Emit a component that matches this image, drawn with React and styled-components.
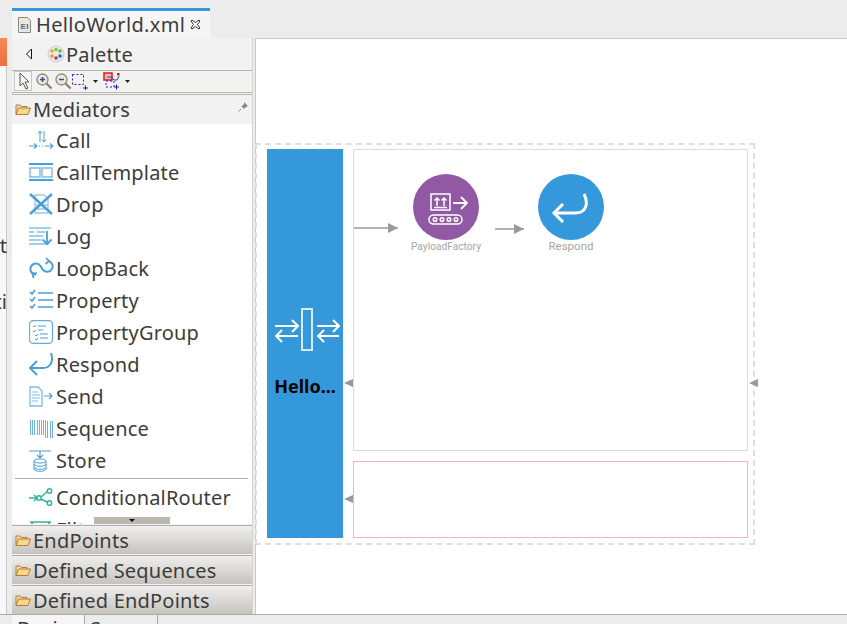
import React from 'react';
import styled, { createGlobalStyle } from 'styled-components';

const blue = '#3498db';
const iconBlue = '#4a9fd8';
const textColor = '#3c3c3c';
const uiFont = `'Noto Sans', 'Open Sans', sans-serif`;

const GlobalStyle = createGlobalStyle`
  html, body {
    margin: 0;
    padding: 0;
    height: 100%;
    overflow: hidden;
    background: #ececec;
  }
  * { box-sizing: border-box; }
`;

const Page = styled.div`
  width: 847px;
  height: 624px;
  display: flex;
  flex-direction: column;
  font-family: ${uiFont};
  color: ${textColor};
  background: #ececec;
  overflow: hidden;
`;

const Body = styled.div`
  display: flex;
  height: 576px;
  flex: none;
`;

const TabStrip = styled.div`
  height: 48px;
  margin-bottom: -10px;
  padding: 8px 0 0 12px;
  display: flex;
  flex: none;
`;

const EditorTab = styled.div`
  width: 198px;
  height: 30px;
  border-top: 3px solid ${blue};
  background: #f5f5f5;
  display: flex;
  align-items: center;
  padding-left: 6px;
  gap: 5px;
  font-size: 20px;
  letter-spacing: 0.35px;
  position: relative;
  z-index: 1;
  svg { flex: none; }
`;

const LeftStub = styled.div`
  width: 12px;
  flex: none;
  border-right: 5px solid #ececec;
  background: #f8f8f8;
  box-shadow: inset -1px 0 0 #c8c8c8;
`;

const OrangeTag = styled.div`
  height: 28px;
  width: 7px;
  background: linear-gradient(#f58a55, #ee6e3c);
`;

const ClippedText = styled.div`
  width: 7px;
  height: 24px;
  margin-top: ${p => p.$top}px;
  overflow: hidden;
  font-size: 20px;
  line-height: 24px;
  direction: rtl;
  white-space: nowrap;
`;

const Palette = styled.div`
  width: 241px;
  flex: none;
  display: flex;
  flex-direction: column;
  background: #f2f2f2;
  border-right: 1px solid #d4d4d4;
  letter-spacing: 0.2px;
`;

const PaletteTitle = styled.div`
  height: 32px;
  display: flex;
  align-items: center;
  padding-left: 13px;
  font-size: 20px;
  svg { flex: none; }
  span { margin-left: 1px; }
`;

const PaletteTools = styled.div`
  height: 23px;
  display: flex;
  align-items: center;
  padding: 0 0 1px 2px;
  border-top: 1px solid #b8b6b0;
  border-bottom: 1px solid #b8b6b0;
  background: #f2f2f0;
  flex: none;
  svg { flex: none; display: block; }
`;

const ArrowTool = styled.div`
  width: 18px;
  height: 20px;
  border: 1px solid #c8c6c0;
  background: #f8f8f8;
  margin-right: 3px;
`;

const ToolGap = styled.span`
  width: 1px;
  flex: none;
`;

const GroupTitle = styled.div`
  height: 30px;
  padding: 0 0 1px 3px;
  display: flex;
  align-items: center;
  gap: 2px;
  font-size: 20px;
  flex: none;
  position: relative;
  border-top: 1px solid #b8b6b0;
  margin-top: 1px;
`;

const PinSlot = styled.span`
  position: absolute;
  right: 3px;
  top: 6px;
  line-height: 0;
`;

const ItemList = styled.div`
  flex: 1;
  min-height: 0;
  background: #fff;
  overflow: hidden;
  position: relative;
`;

const Item = styled.div`
  height: 32px;
  display: flex;
  align-items: center;
  padding-left: 17px;
  gap: 1px;
  font-size: 20px;
  white-space: nowrap;
  svg { flex: none; }
`;

const ListRule = styled.div`
  height: 1px;
  margin: 2px 4px 2px 3px;
  background: #b0aeaa;
`;

const ScrollDown = styled.div`
  position: absolute;
  left: 82px;
  bottom: 0;
  width: 76px;
  height: 7px;
  background: #bbb7b1;
  display: flex;
  justify-content: center;
  &::after {
    content: '';
    margin-top: 2px;
    border-left: 3px solid transparent;
    border-right: 3px solid transparent;
    border-top: 3px solid #111;
    height: 0;
  }
`;

const Drawer = styled.div`
  height: 29px;
  flex: none;
  margin-top: 1px;
  display: flex;
  align-items: center;
  padding-left: 3px;
  gap: 2px;
  font-size: 20px;
  border-top: 1px solid #b0aeaa;
  background: linear-gradient(#f0efed, #c6c3be);
`;

const Canvas = styled.div`
  width: 592px;
  flex: none;
  margin-left: 2px;
  height: 576px;
  background: #fff;
  border-top: 1px solid #c8c8c8;
  border-left: 1px solid #c8c8c8;
  position: relative;
  padding-top: 104px;
`;

const SequenceFrame = styled.div`
  width: 500px;
  height: 402px;
  margin-left: -1px;
  padding: 4px 5px 5px 10px;
  display: flex;
  gap: 10px;
  border: 2px dashed #dfdfdf;
`;

const EndpointBlock = styled.div`
  width: 76px;
  flex: none;
  background: ${blue};
  display: flex;
  flex-direction: column;
  align-items: center;
  padding: 159px 0 0 4px;
`;

const EndpointName = styled.div`
  margin: 22px 0 0 -4px;
  font-size: 18px;
  font-weight: 700;
  color: #000;
`;

const Lanes = styled.div`
  flex: 1;
  display: flex;
  flex-direction: column;
  gap: 10px;
`;

const InLane = styled.div`
  flex: none;
  height: 302px;
  border: 1px solid #dcdcdc;
  position: relative;
`;

const FaultLane = styled.div`
  flex: 1;
  border: 1px solid #eeb8b4;
`;

const Node = styled.div`
  position: absolute;
  left: ${p => p.$x}px;
  top: 24px;
  width: 96px;
  display: flex;
  flex-direction: column;
  align-items: center;
`;

const NodeCircle = styled.div`
  width: 66px;
  height: 66px;
  border-radius: 50%;
  background: ${p => p.$color};
  display: flex;
  align-items: center;
  justify-content: center;
`;

const NodeLabel = styled.div`
  margin-top: ${p => p.$gap}px;
  font-family: Roboto, 'Liberation Sans', sans-serif;
  color: #a6a6a6;
  font-size: ${p => p.$size}px;
  white-space: nowrap;
`;

const FlowArrow = styled.div`
  position: absolute;
  left: ${p => p.$x}px;
  top: ${p => p.$y}px;
  width: ${p => p.$w}px;
  height: 2px;
  background: #b4b4b4;
  &::after {
    content: '';
    position: absolute;
    right: 0;
    top: -4px;
    border-left: 10px solid #999;
    border-top: 5px solid transparent;
    border-bottom: 5px solid transparent;
  }
`;

const Port = styled.div`
  position: absolute;
  left: ${p => p.$x}px;
  top: ${p => p.$y}px;
  border-right: 9px solid #999;
  border-top: 4.5px solid transparent;
  border-bottom: 4.5px solid transparent;
`;

const Footer = styled.div`
  height: 10px;
  flex: none;
  display: flex;
  padding-left: 12px;
  border-top: 1px solid #adada5;
  background: #ececec;
  overflow: hidden;
  position: relative;
`;

const FooterTab = styled.div`
  width: ${p => p.$w}px;
  height: 28px;
  border-right: 1px solid #a8a8a0;
  font-size: 20px;
  line-height: 28px;
  padding-left: 5px;
  background: ${p => p.$active ? '#f6f6f6' : 'transparent'};
`;

const Icon = ({ children, w = 26, h = 24, vb }) => (
  <svg width={w} height={h} viewBox={vb || `0 0 ${w} ${h}`} fill="none" stroke={iconBlue} strokeWidth="1.3">
    {children}
  </svg>
);

const FolderIcon = () => (
  <svg width="16" height="14" viewBox="0 0 16 14">
    <path d="M1 12V3h4l1.500 1.500H12V6" fill="#f4dba6" stroke="#b57b37" />
    <path d="M1 12.500 3.500 6H15.500L13 12.500Z" fill="#f8d888" stroke="#b57b37" />
  </svg>
);

const CallIcon = () => (
  <Icon>
    <path d="M11 14V3M9 5.500 11 3l2 2.500M15 3v11M13 11.500 15 14l2-2.500" strokeWidth="1" />
    <path d="M0 18h7M5 15.500 8 18l-3 2.500M16 18h7M21 15.500 24 18l-3 2.500M10 18h1M13 18h1" strokeWidth="1.100" />
  </Icon>
);

const TemplateIcon = () => (
  <Icon>
    <path d="M0 4h24M0 20h24" strokeWidth="2" />
    <path d="M1 8h10v9H1zM13 8h10v9H13z" stroke="#7dbbe6" strokeWidth="1.400" />
  </Icon>
);

const DropIcon = () => (
  <Icon>
    <path d="M6 3h9l4 4v14H6z" stroke="#9cc7e6" />
    <path d="M6 13h13M6 17h13" stroke="#9cc7e6" />
    <path d="M1 2l22 20M23 2 1 22" strokeWidth="2.400" />
  </Icon>
);

const LogIcon = () => (
  <Icon>
    <path d="M0 4h22M0 8h5M8 8h8M0 12h14M0 16h12M0 20h20" strokeWidth="1.200" />
    <path d="M18 7v13M13.500 15.500 18 20l4.500-4.500" strokeWidth="1.800" />
  </Icon>
);

const LoopIcon = () => (
  <Icon>
    <path d="M7 18.500a5.500 5.500 0 1 1 4.500-8.500l2.500 4a5.500 5.500 0 1 0 5.500-9" strokeWidth="2" />
    <path d="M17 2l3 3-3.500 3M4.500 22l-1-4.500 4.500-.5" strokeWidth="1.700" />
  </Icon>
);

const PropertyIcon = () => (
  <Icon>
    <path d="M9 5h15M9 12h15M9 19h15" strokeWidth="1.600" />
    <path d="M1 4l2 2 3-4M1 11l2 2 3-4M1 18l2 2 3-4" strokeWidth="1.500" />
  </Icon>
);

const GroupIcon = () => (
  <Icon>
    <rect x="0.500" y="0.500" width="23" height="23" rx="4" stroke="#62aee2" />
    <path d="M9 6h8M9 10h5M11 14h8M11 18h8" strokeWidth="1.200" />
    <path d="M4 6l1 1 2-2M4 11l1 1 2-2M6 15l1 1 2-2M6 19l1 1 2-2" strokeWidth="1" />
  </Icon>
);

const RespondIcon = () => (
  <Icon>
    <path d="M22 1c3 9-1 15-8 15H1" strokeWidth="2" />
    <path d="M8 9l-7 7 7 7" strokeWidth="2" />
  </Icon>
);

const SendIcon = () => (
  <Icon>
    <path d="M1 3h8l4 4v15H1z" stroke="#7dbbe6" />
    <path d="M3 8h6M3 11h8M3 14h8M3 17h6" strokeWidth="1" stroke="#7dbbe6" />
    <path d="M15 12h8M20 9l3 3-3 3" strokeWidth="1.100" />
  </Icon>
);

const sequenceBars = [1.5, 3.5, 5.5, 8.5, 10.5, 12.5, 14.5, 16.5, 18.5, 21.5, 23.5];

const SequenceIcon = () => (
  <svg width="26" height="24" viewBox="0 0 26 24" stroke="#6db1e2" strokeWidth="1" shapeRendering="crispEdges">
    {sequenceBars.map((x, i) => (
      <path key={x} d={`M${x} ${i > 7 ? 5 : 4}V${i > 6 ? 22 : 19}`} />
    ))}
  </svg>
);

const StoreIcon = () => (
  <Icon>
    <path d="M0 3h22M11 3v7M8 7l3 3 3-3" strokeWidth="1.100" />
    <ellipse cx="11" cy="13" rx="6" ry="2" strokeWidth="1" />
    <path d="M5 13v8c0 3 12 3 12 0v-8M5 16c0 3 12 3 12 0M5 19c0 3 12 3 12 0" strokeWidth="1" />
  </Icon>
);

const RouterIcon = () => (
  <svg width="26" height="24" viewBox="0 0 26 24" fill="none" stroke="#2bb59a" strokeWidth="1.400">
    <path d="M0 13h8M5 10l3 3-3 3M12 12l7-6" />
    <circle cx="10" cy="13" r="2.200" />
    <circle cx="20.500" cy="6" r="2.200" />
    <circle cx="20.500" cy="18" r="2.200" />
    <path d="M12 14l6 3" />
  </svg>
);

const FilterIcon = () => (
  <svg width="26" height="24" viewBox="0 0 26 24" fill="none" stroke="#2bb59a" strokeWidth="1.600">
    <path d="M2 5h19l-7 10v8H9v-8z" />
  </svg>
);

const items = [
  ['Call', CallIcon],
  ['CallTemplate', TemplateIcon],
  ['Drop', DropIcon],
  ['Log', LogIcon],
  ['LoopBack', LoopIcon],
  ['Property', PropertyIcon],
  ['PropertyGroup', GroupIcon],
  ['Respond', RespondIcon],
  ['Send', SendIcon],
  ['Sequence', SequenceIcon],
  ['Store', StoreIcon],
];

const drawers = ['EndPoints', 'Defined Sequences', 'Defined EndPoints'];

const FileIcon = () => (
  <svg width="13" height="16" viewBox="0 0 13 16">
    <path d="M.5.500h9l3 3v12H.5z" fill="#e8e8de" stroke="#8a8a80" />
    <text x="2.500" y="12" fontSize="8" fontFamily="Liberation Sans" fontWeight="700" fill="#3f66a8">EI</text>
  </svg>
);

const CloseIcon = () => (
  <svg width="11" height="11" viewBox="0 0 11 11">
    <path d="M1 2 2 1 5.500 3.500 9 1 10 2 7.500 5.500 10 9 9 10 5.500 7.500 2 10 1 9 3.500 5.500Z" fill="#fff" stroke="#333" />
  </svg>
);

const PaletteIcon = () => (
  <svg width="18" height="18" viewBox="0 0 18 18">
    <circle cx="9" cy="9" r="8" fill="#e4ebf4" stroke="#c8cfda" />
    <circle cx="5" cy="6" r="1.800" fill="#f2a21d" />
    <circle cx="9" cy="4.500" r="1.800" fill="#8ec31f" />
    <circle cx="13" cy="6" r="1.800" fill="#5fb82e" />
    <circle cx="5" cy="11" r="1.800" fill="#ef9c12" />
    <circle cx="9" cy="13" r="1.800" fill="#d8322a" />
    <circle cx="13" cy="11" r="1.800" fill="#2b62c7" />
  </svg>
);

const CollapseIcon = () => (
  <svg width="20" height="14" viewBox="0 0 20 14" style={{ marginRight: 2 }}>
    <path d="M6.500 2v10L1.500 7Z" fill="#fff" stroke="#111" />
  </svg>
);

const ArrowCursor = () => (
  <svg width="16" height="18" viewBox="0 0 16 18">
    <path d="M5 1v13l3-3 3 6 2-1-3-6h4Z" fill="#f8f8f0" stroke="#55554f" />
  </svg>
);

const ZoomIcon = ({ plus }) => (
  <svg width="18" height="18" viewBox="0 0 18 18">
    <circle cx="7.500" cy="7.500" r="5.500" fill="#e8e8e0" stroke="#908a78" strokeWidth="1.300" />
    <path d="M11.500 11.500l5 5" stroke="#8d7c5e" strokeWidth="2" />
    <path d={plus ? 'M5 7.500h5M7.500 5v5' : 'M5 7.500h5'} stroke="#2f4f9a" strokeWidth="1.500" />
  </svg>
);

const MarqueeIcon = () => (
  <svg width="18" height="18" viewBox="0 0 18 18" fill="none">
    <rect x="0.500" y="2.500" width="11" height="10" stroke="#2020d8" strokeDasharray="2 2" />
    <path d="M11 16h5M13.500 13.500v5" stroke="#2020a0" />
  </svg>
);

const ConnectionIcon = () => (
  <svg width="19" height="18" viewBox="0 0 19 18" fill="none">
    <rect x="1" y="1" width="8" height="7" fill="#f5c0b8" stroke="#e01818" strokeWidth="1.500" />
    <path d="M4 5h4l3 3h3l2-4" stroke="#2040d0" />
    <rect x="14" y="1" width="2.500" height="2.500" fill="#e01818" />
    <rect x="3" y="9" width="8" height="6" stroke="#2020d8" strokeDasharray="2 2" />
    <path d="M11 15h5M13.500 12.500v5" stroke="#2020a0" />
  </svg>
);

const Caret = () => (
  <svg width="13" height="18" viewBox="0 0 13 18">
    <path d="M3 8h5l-2.500 3Z" fill="#222" />
  </svg>
);

const PinIcon = () => (
  <svg width="12" height="12" viewBox="0 0 12 12">
    <path d="M7 1l4 4-2 1-2 2-2-2-1 0 3-3Z" fill="#8a8a80" />
    <path d="M4 8 1.500 10.500" stroke="#8a8a80" />
  </svg>
);

const EndpointIcon = () => (
  <svg width="66" height="44" viewBox="0 0 66 44" fill="none" stroke="#fff" strokeWidth="2">
    <rect x="28" y="1" width="10" height="41" stroke="#d6ecfa" />
    <path d="M1 18h22M18 12l6 6-6 6M24 28H2M8 22l-6 6 6 6" />
    <path d="M43 18h22M59 12l6 6-6 6M65 28H44M50 22l-6 6 6 6" />
  </svg>
);

const FactoryGlyph = () => (
  <svg width="44" height="36" viewBox="0 0 44 36" fill="none" stroke="#fff" strokeWidth="1.500">
    <rect x="7" y="5" width="19" height="16" />
    <path d="M13 17V9M10.500 11.500 13 9l2.500 2.500M20 17V9M17.500 11.500 20 9l2.500 2.500M10 18.500h13" />
    <path d="M29 14h14M37 8l6 6-6 6" strokeWidth="1.800" />
    <rect x="5" y="26" width="33" height="9" rx="4.500" />
    <circle cx="11" cy="30.500" r="1.800" />
    <circle cx="18" cy="30.500" r="1.800" />
    <circle cx="25" cy="30.500" r="1.800" />
    <circle cx="32" cy="30.500" r="1.800" />
  </svg>
);

const RespondGlyph = () => (
  <svg width="40" height="32" viewBox="0 0 40 32" fill="none" stroke="#fff" strokeWidth="3">
    <path d="M33 3c5 10 2 19-9 19H3" />
    <path d="M12 13l-9 9 9 9" />
  </svg>
);

const App = () => (
  <Page>
    <GlobalStyle />
    <TabStrip>
      <EditorTab>
        <FileIcon />
        <span>HelloWorld.xml</span>
        <CloseIcon />
      </EditorTab>
    </TabStrip>
    <Body>
      <LeftStub>
        <OrangeTag />
        <ClippedText $top={168}>t</ClippedText>
        <ClippedText $top={32}>ti</ClippedText>
      </LeftStub>
      <Palette>
        <PaletteTitle>
          <CollapseIcon />
          <PaletteIcon />
          <span>Palette</span>
        </PaletteTitle>
        <PaletteTools>
          <ArrowTool><ArrowCursor /></ArrowTool>
          <ZoomIcon plus />
          <ToolGap />
          <ZoomIcon />
          <MarqueeIcon />
          <Caret />
          <ConnectionIcon />
          <Caret />
        </PaletteTools>
        <GroupTitle>
          <FolderIcon />
          Mediators
          <PinSlot><PinIcon /></PinSlot>
        </GroupTitle>
        <ItemList>
          {items.map(([name, Glyph]) => (
            <Item key={name}>
              <Glyph />
              {name}
            </Item>
          ))}
          <ListRule />
          <Item>
            <RouterIcon />
            ConditionalRouter
          </Item>
          <Item>
            <FilterIcon />
            Filter
          </Item>
          <ScrollDown />
        </ItemList>
        {drawers.map(name => (
          <Drawer key={name}>
            <FolderIcon />
            {name}
          </Drawer>
        ))}
      </Palette>
      <Canvas>
        <SequenceFrame>
          <EndpointBlock>
            <EndpointIcon />
            <EndpointName>Hello...</EndpointName>
          </EndpointBlock>
          <Lanes>
            <InLane>
              <FlowArrow $x={0} $y={77} $w={44} />
              <Node $x={44}>
                <NodeCircle $color="#9159a3"><FactoryGlyph /></NodeCircle>
                <NodeLabel $gap={1} $size={10.2}>PayloadFactory</NodeLabel>
              </Node>
              <FlowArrow $x={141} $y={78} $w={29} />
              <Node $x={169}>
                <NodeCircle $color={blue}><RespondGlyph /></NodeCircle>
                <NodeLabel $gap={-1} $size={11.5}>Respond</NodeLabel>
              </Node>
            </InLane>
            <FaultLane />
          </Lanes>
        </SequenceFrame>
        <Port $x={88} $y={340} />
        <Port $x={88} $y={456} />
        <Port $x={493} $y={340} />
      </Canvas>
    </Body>
    <Footer>
      <FooterTab $w={73} $active>Design</FooterTab>
      <FooterTab $w={73}>Source</FooterTab>
    </Footer>
  </Page>
);

export default App;
